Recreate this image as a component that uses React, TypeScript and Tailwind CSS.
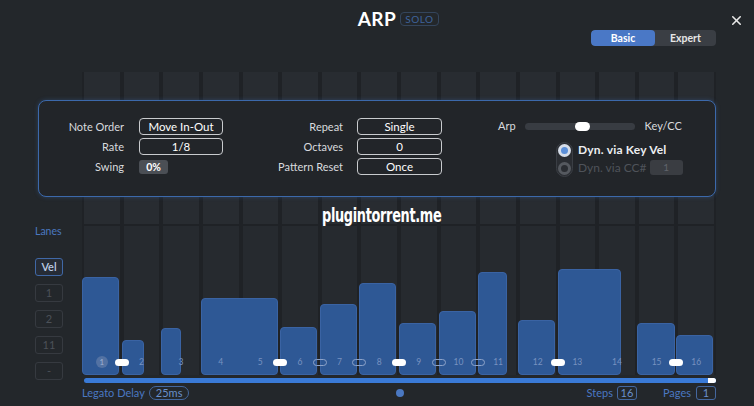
import { X } from "lucide-react";

type Bar = { start: number; span: number; w: number; h: number };

const BARS: Bar[] = [
    { start: 1, span: 1, w: 37, h: 98 },
    { start: 2, span: 1, w: 22, h: 35 },
    { start: 3, span: 1, w: 20, h: 47 },
    { start: 4, span: 2, w: 77, h: 77 },
    { start: 6, span: 1, w: 37, h: 48 },
    { start: 7, span: 1, w: 37, h: 71 },
    { start: 8, span: 1, w: 37, h: 92 },
    { start: 9, span: 1, w: 37, h: 52 },
    { start: 10, span: 1, w: 37, h: 64 },
    { start: 11, span: 1, w: 29, h: 103 },
    { start: 12, span: 1, w: 37, h: 55 },
    { start: 13, span: 2, w: 63, h: 106 },
    { start: 15, span: 1, w: 38, h: 52 },
    { start: 16, span: 1, w: 37, h: 40 },
];

// tie links drawn on the boundary after step n
const FILLED = [1, 5, 8, 12, 15];
const HOLLOW = [6, 7, 9, 10];

const STEPS = Array.from({ length: 16 }, (_, i) => i + 1);

function FieldRow({ label, value }: { label: string; value: string }) {
    return (
        <>
            <span className="text-right text-[11px] leading-[17px] text-[#d9dbde]">{label}</span>
            <span className="h-[17px] rounded-[4px] border border-[#c9cbce] text-center text-[11.5px] leading-[15px] text-white">
                {value}
            </span>
        </>
    );
}

function LaneButton({ label, active }: { label: string; active?: boolean }) {
    return (
        <div
            className={
                active
                    ? "flex h-[18px] w-[28px] items-center justify-center rounded-[3px] border border-[#4068a6] bg-[#262c36] text-[11px] font-semibold text-[#bccbe3]"
                    : "flex h-[18px] w-[28px] items-center justify-center rounded-[3px] border border-[#363a40] text-[11px] text-[#4c5158]"
            }
        >
            {label}
        </div>
    );
}

export default function App() {
    return (
        <div className="relative flex h-[406px] w-[754px] flex-col overflow-hidden bg-[#23272b] font-['Lato','Inter',sans-serif] text-white">
            {/* Header */}
            <div className="grid grid-cols-[1fr_auto_1fr] items-center pt-[9px]">
                <div />
                <h1 className="text-[19px] font-bold leading-[20px] tracking-[0.5px]">ARP</h1>
                <div className="flex items-center justify-between pl-[4px] pr-[10px]">
                    <span className="rounded-[4px] border border-[#34455c] px-[4px] text-[10px] leading-[12px] tracking-[0.5px] text-[#3e639c]">
                        SOLO
                    </span>
                    <X size={15} strokeWidth={2.5} className="mt-[2px] text-[#e8e8e8]" />
                </div>
            </div>
            <div className="mt-[1px] flex justify-end pr-[38px]">
                <div className="flex h-[16px] w-[125px] overflow-hidden rounded-[4px] bg-[#3a3e44] text-[10.5px] font-bold leading-[16px]">
                    <span className="w-[64px] rounded-[4px] bg-[#4a78c6] text-center text-white">Basic</span>
                    <span className="flex-1 text-center text-[#e6e6e6]">Expert</span>
                </div>
            </div>

            {/* Lanes + step grid */}
            <div className="mt-[26px] flex h-[303px]">
                <div className="flex w-[82px] flex-col gap-[8px] pl-[35px] pt-[152px]">
                    <span className="mb-[12px] text-[10.5px] leading-[14px] text-[#4a78c0]">Lanes</span>
                    <LaneButton label="Vel" active />
                    <LaneButton label="1" />
                    <LaneButton label="2" />
                    <LaneButton label="11" />
                    <LaneButton label="-" />
                </div>

                <div className="grid w-[634px] grid-cols-16 grid-rows-1">
                    {STEPS.map((s) => (
                        <div
                            key={`col-${s}`}
                            style={{ gridColumn: s, gridRow: 1 }}
                            className="flex flex-col gap-[2px] bg-[#1f2226] px-[2px]"
                        >
                            <div className="h-[152px] bg-[#282c31]" />
                            <div className="flex-1 bg-[#262a2f]" />
                        </div>
                    ))}

                    {BARS.map((b) => (
                        <div
                            key={`bar-${b.start}`}
                            style={{ gridColumn: `${b.start} / span ${b.span}`, gridRow: 1, width: b.w, height: b.h }}
                            className="self-end justify-self-start rounded-[4px] border border-[#3a63a3] bg-[#2e5895]"
                        />
                    ))}

                    {STEPS.map((s) => (
                        <div
                            key={`lbl-${s}`}
                            style={{ gridColumn: s, gridRow: 1 }}
                            className="relative flex items-end justify-center pb-[7px]"
                        >
                            {s === 1 ? (
                                <span className="flex h-[12px] w-[12px] items-center justify-center rounded-full bg-[#5372a3] text-[8px] text-[#9fb3d4]">
                                    1
                                </span>
                            ) : (
                                <span className="text-[8.5px] leading-[12px] text-[#7892c0]">{s}</span>
                            )}
                            {FILLED.includes(s) && (
                                <span className="absolute bottom-[9px] right-[-7px] h-[7px] w-[14px] rounded-full bg-white" />
                            )}
                            {HOLLOW.includes(s) && (
                                <span className="absolute bottom-[9px] right-[-7px] h-[7px] w-[14px] rounded-full border border-[#8da3c9]" />
                            )}
                        </div>
                    ))}
                </div>
            </div>

            {/* Progress */}
            <div className="ml-[84px] mt-[3px] flex h-[5px] w-[632px] overflow-hidden rounded-full bg-[#3a7ad6]">
                <div className="flex-1" />
                <div className="w-[8px] bg-white" />
            </div>

            {/* Footer */}
            <div className="ml-[82px] mt-[3px] flex h-[14px] w-[634px] items-center justify-between text-[11px] text-[#4a78c2]">
                <div className="flex items-center gap-[4px]">
                    <span>Legato Delay</span>
                    <span className="rounded-full border border-[#44679e] px-[6px] text-[11px] leading-[12px] text-[#6a90cc]">25ms</span>
                </div>
                <span className="ml-[25px] h-[8px] w-[8px] rounded-full bg-[#4a78c2]" />
                <div className="flex items-center">
                    <span>Steps</span>
                    <span className="ml-[4px] w-[20px] rounded-[3px] border border-[#44679e] text-center leading-[12px] text-[#6a90cc]">16</span>
                    <span className="ml-[26px]">Pages</span>
                    <span className="ml-[5px] w-[20px] rounded-[3px] border border-[#44679e] text-center leading-[12px] text-[#6a90cc]">1</span>
                </div>
            </div>

            {/* Settings panel, drawn over the step columns */}
            <div className="absolute left-[38px] top-[100px] flex h-[97px] w-[678px] rounded-[8px] border border-[#3c69ab] bg-[#222529] pt-[17px] shadow-[0_0_4px_rgba(60,105,171,0.4)]">
                <div className="ml-[21px] grid h-fit grid-cols-[64px_84px] gap-x-[15px] gap-y-[3px]">
                    <FieldRow label="Note Order" value="Move In-Out" />
                    <FieldRow label="Rate" value="1/8" />
                    <span className="text-right text-[11px] leading-[17px] text-[#d9dbde]">Swing</span>
                    <span className="mt-[2px] h-[14px] w-[29px] rounded-[3px] bg-[#4b4f55] text-center text-[10.5px] font-bold leading-[14px] text-white">
                        0%
                    </span>
                </div>

                <div className="ml-[40px] grid h-fit grid-cols-[80px_85px] gap-x-[14px] gap-y-[3px]">
                    <FieldRow label="Repeat" value="Single" />
                    <FieldRow label="Octaves" value="0" />
                    <FieldRow label="Pattern Reset" value="Once" />
                </div>

                <div className="ml-[56px] flex flex-col">
                    <div className="flex h-[17px] items-center text-[11px] text-[#d9dbde]">
                        <span>Arp</span>
                        <div className="ml-[9px] flex h-[7px] w-[110px] items-center rounded-full bg-[#383c42]">
                            <span className="ml-[50px] h-[9px] w-[15px] rounded-full bg-white" />
                        </div>
                        <span className="ml-[10px]">Key/CC</span>
                    </div>
                    <div className="ml-[58px] mt-[7px] flex">
                        <div className="flex flex-col gap-[5px] rounded-full border border-[#3a3e44] bg-[#2a2d32] p-[1px]">
                            <span className="flex h-[13px] w-[13px] items-center justify-center rounded-full border-[3px] border-[#d6dde8] bg-[#5b8fd8]" />
                            <span className="flex h-[13px] w-[13px] items-center justify-center rounded-full border-[3px] border-[#55595f] bg-[#2a2d32]" />
                        </div>
                        <div className="ml-[5px] flex flex-col gap-[3px] pt-[1px]">
                            <span className="text-[12px] font-bold leading-[14px] tracking-[0.2px] text-[#eceef1]">Dyn. via Key Vel</span>
                            <div className="flex items-center">
                                <span className="text-[12px] leading-[14px] text-[#4f535a]">Dyn. via CC#</span>
                                <span className="ml-[3px] h-[15px] w-[33px] rounded-[3px] bg-[#3a3d42] text-center text-[10px] leading-[15px] text-[#60646b]">
                                    1
                                </span>
                            </div>
                        </div>
                    </div>
                </div>
            </div>

            {/* Watermark */}
            <span className="absolute left-[322px] top-[201px] block origin-left font-['DejaVu_Sans',sans-serif] text-[19px] font-bold tracking-[-0.5px] text-white [transform:scaleX(0.68)]">
                plugintorrent.me
            </span>
        </div>
    );
}
